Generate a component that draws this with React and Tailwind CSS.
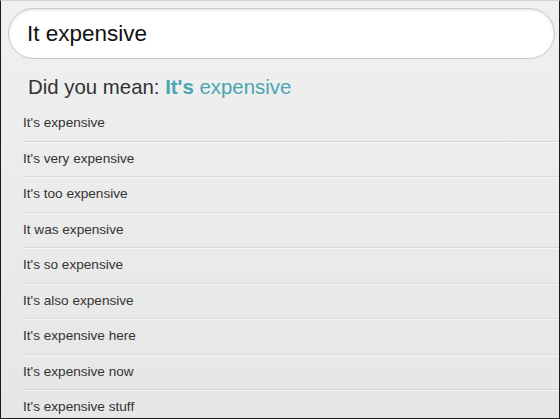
import React from 'react';

const SUGGESTIONS = [
  "It's expensive",
  "It's very expensive",
  "It's too expensive",
  'It was expensive',
  "It's so expensive",
  "It's also expensive",
  "It's expensive here",
  "It's expensive now",
  "It's expensive stuff",
];

const App = () => {
  return (
    <div
      className="h-[419px] w-[560px] overflow-hidden border-x border-b border-x-[#1a1a1a] border-b-[#1a1a1a] border-t border-t-[#d4d4d4] bg-gradient-to-b from-[#f0f0f0] to-[#e6e6e6]"
      style={{ fontFamily: '"Liberation Sans", Arial, sans-serif' }}
    >
      {/* Search box */}
      <div className="pl-[7px] pr-[4px] pt-[7px]">
        <div className="flex h-[51px] items-center rounded-full border border-[#c8c8c8] bg-white pl-[18px] shadow-[inset_0_1px_3px_rgba(0,0,0,0.12)]">
          <span className="text-[22.5px] text-[#111]">It expensive</span>
        </div>
      </div>

      {/* Did you mean */}
      <div className="pl-[27px] pt-[16px] text-[20.4px] leading-[24px] text-[#333]">
        Did you mean: <span className="font-bold text-[#4aa5b4]">It's</span>{' '}
        <span className="text-[#4aa5b4]">expensive</span>
      </div>

      {/* Suggestion list */}
      <ul className="mt-[7px] pl-[22px]">
        {SUGGESTIONS.map((s) => (
          <li
            key={s}
            className="flex h-[35.5px] items-center border-b border-[#d8d8d8] text-[13.6px] text-[#333] shadow-[0_1px_0_#f6f6f6]"
          >
            {s}
          </li>
        ))}
      </ul>
    </div>
  );
};

export default App;
